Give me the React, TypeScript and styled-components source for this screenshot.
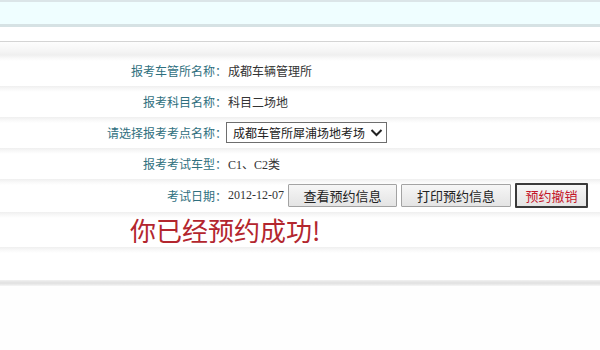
import { createGlobalStyle, styled } from "styled-components";

const GlobalStyle = createGlobalStyle`
  body {
    margin: 0;
    background: #fefefe;
    font-family: "Noto Sans CJK SC", "Liberation Sans", sans-serif;
  }
`;

const TopBar = styled.div`
  height: 22px;
  background: #effeff;
  border-top: 2px solid #dbe5e8;
  border-bottom: 3px solid #d6e2e4;
`;

const Gap = styled.div`
  height: 14px;
  background: #fff;
  border-bottom: 1px solid #d4d4d4;
`;

const HeadRow = styled.div`
  height: 13px;
  background: linear-gradient(#fdfdfd, #f6f6f6 60%, #efefef);
`;

const Row = styled.div<{ $h: number }>`
  display: grid;
  grid-template-columns: 227px 1fr;
  align-items: center;
  height: ${(p) => p.$h}px;
  background: linear-gradient(#efefef, #f8f8f8 3px, #fff 6px);
`;

const Label = styled.div`
  text-align: right;
  font-size: 12px;
  color: #2f6f7e;
  line-height: 14px;
`;

const Value = styled.div<{ $serif?: boolean }>`
  display: flex;
  align-items: center;
  padding-left: 1px;
  font-size: 12px;
  color: #333;
  font-family: ${(p) =>
    p.$serif
      ? `"Liberation Serif", "Noto Sans CJK SC", serif`
      : `"Noto Sans CJK SC", sans-serif`};
`;

const SelectBox = styled.div`
  box-sizing: border-box;
  display: flex;
  align-items: center;
  justify-content: space-between;
  width: 161px;
  height: 21px;
  margin-left: -2px;
  padding: 0 3px 0 6px;
  border: 1px solid #6e6e6e;
  background: #fff;
  font-size: 12px;
  white-space: nowrap;
  color: #222;

  svg {
    flex-shrink: 0;
  }
`;

const DateText = styled.span`
  margin-right: 4px;
`;

const Button = styled.button<{ $w: number; $active?: boolean }>`
  box-sizing: border-box;
  width: ${(p) => p.$w}px;
  height: ${(p) => (p.$active ? 25 : 23)}px;
  margin-right: 4px;
  padding: 0;
  font-family: "Noto Sans CJK SC", sans-serif;
  font-size: 13px;
  color: ${(p) => (p.$active ? "#c4162a" : "#222")};
  background: linear-gradient(#f6f6f6, #e4e4e4);
  border: ${(p) => (p.$active ? "2px solid #3a3a3a" : "1px solid #a3a3a3")};
  border-radius: 1px;
`;

const Message = styled.div`
  padding-left: 130px;
  font-size: 26px;
  line-height: 30px;
  color: #b3262e;
  font-family: "Noto Sans CJK SC", sans-serif;
`;

const BlankRow = styled.div`
  height: 33px;
  background: linear-gradient(#efefef, #f8f8f8 3px, #fff 6px);
`;

const MessageRow = styled.div`
  display: flex;
  align-items: center;
  height: 35px;
  background: linear-gradient(#efefef, #f8f8f8 3px, #fff 6px);
`;

const BottomLine = styled.div`
  height: 6px;
  background: linear-gradient(#f1f1f1, #e3e3e3 40%, #e3e3e3 60%, #f6f6f6);
`;

function Chevron() {
  return (
    <svg width="13" height="9" viewBox="0 0 13 9">
      <path d="M1.5 2 L6.5 7 L11.5 2" fill="none" stroke="#222" strokeWidth="2" />
    </svg>
  );
}

export default function App() {
  return (
    <>
      <GlobalStyle />
      <TopBar />
      <Gap />
      <HeadRow />
      <Row $h={31}>
        <Label>报考车管所名称：</Label>
        <Value>成都车辆管理所</Value>
      </Row>
      <Row $h={31}>
        <Label>报考科目名称：</Label>
        <Value>科目二场地</Value>
      </Row>
      <Row $h={31}>
        <Label>请选择报考考点名称：</Label>
        <Value>
          <SelectBox>
            <span>成都车管所犀浦场地考场</span>
            <Chevron />
          </SelectBox>
        </Value>
      </Row>
      <Row $h={31}>
        <Label>报考考试车型：</Label>
        <Value $serif>C1、C2类</Value>
      </Row>
      <Row $h={33}>
        <Label>考试日期：</Label>
        <Value $serif>
          <DateText>2012-12-07</DateText>
          <Button $w={109}>查看预约信息</Button>
          <Button $w={110}>打印预约信息</Button>
          <Button $w={73} $active>
            预约撤销
          </Button>
        </Value>
      </Row>
      <MessageRow>
        <Message>你已经预约成功!</Message>
      </MessageRow>
      <BlankRow />
      <BottomLine />
    </>
  );
}
